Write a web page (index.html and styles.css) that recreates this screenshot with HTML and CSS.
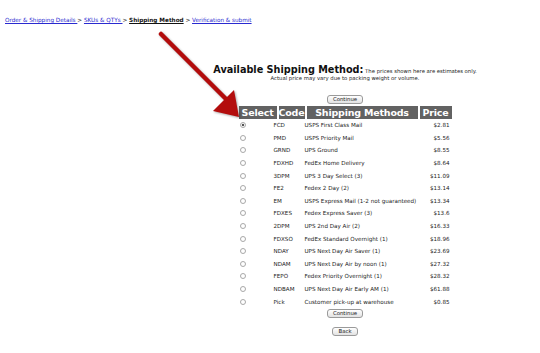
FILE: index.html
```html
<!DOCTYPE html>
<html lang="en">
<head>
    <meta charset="UTF-8">
    <title>Shipping Method</title>
    <link rel="stylesheet" href="styles.css">
</head>
<body>

    <div class="crumbs">
        <a href="#">Order &amp; Shipping Details </a> &gt;
        <a href="#">SKUs &amp; QTYs </a> &gt;
        <span class="current">Shipping Method</span> &gt;
        <a href="#">Verification &amp; submit</a>
    </div>

    <!-- red arrow drawn over the page -->
    <svg class="arrow" width="100" height="100" viewBox="0 0 100 100">
        <line x1="11" y1="9" x2="78" y2="76" stroke="#b30d0d" stroke-width="4.5" stroke-linecap="round"/>
        <polygon points="89,92 84,65 63,86" fill="#b30d0d"/>
    </svg>

    <div class="main">
        <div class="intro">
            <span class="title">Available Shipping Method:</span>
            <span class="note">The prices shown here are estimates only.</span><br>
            <span class="note">Actual price may vary due to packing weight or volume.</span>
        </div>

        <form class="ship-form">
            <button type="button" class="btn">Continue</button>

            <div class="ship-table">
                <div class="head">
                    <div>Select</div>
                    <div>Code</div>
                    <div>Shipping Methods</div>
                    <div>Price</div>
                </div>
                <div id="rows" class="rows"></div>
            </div>

            <button type="button" class="btn">Continue</button>
            <button type="button" class="btn btn-back">Back</button>
        </form>
    </div>

    <script>
        // lista de metodos de envio
        const metodos = [
            ['FCD', 'USPS First Class Mail', '$2.81'],
            ['PMD', 'USPS Priority Mail', '$5.56'],
            ['GRND', 'UPS Ground', '$8.55'],
            ['FDXHD', 'FedEx Home Delivery', '$8.64'],
            ['3DPM', 'UPS 3 Day Select (3)', '$11.09'],
            ['FE2', 'Fedex 2 Day (2)', '$13.14'],
            ['EM', 'USPS Express Mail (1-2 not guaranteed)', '$13.34'],
            ['FDXES', 'Fedex Express Saver (3)', '$13.6'],
            ['2DPM', 'UPS 2nd Day Air (2)', '$16.33'],
            ['FDXSO', 'FedEx Standard Overnight (1)', '$18.96'],
            ['NDAY', 'UPS Next Day Air Saver (1)', '$23.69'],
            ['NDAM', 'UPS Next Day Air by noon (1)', '$27.32'],
            ['FEPO', 'Fedex Priority Overnight (1)', '$28.32'],
            ['NDBAM', 'UPS Next Day Air Early AM (1)', '$61.88'],
            ['Pick', 'Customer pick-up at warehouse', '$0.85']
        ];

        const rows = document.getElementById('rows');
        metodos.forEach((m, i) => {
            rows.innerHTML += `
                <label class="row">
                    <span><input type="radio" name="metodo" value="${m[0]}" ${i === 0 ? 'checked' : ''}></span>
                    <span>${m[0]}</span>
                    <span>${m[1]}</span>
                    <span class="price">${m[2]}</span>
                </label>`;
        });
    </script>

</body>
</html>
```

FILE: styles.css
```css
body {
    margin: 0;
    font-family: "DejaVu Sans", Verdana, sans-serif;
    color: #222;
    background: #fff;
    position: relative;
}
.crumbs {
    padding: 17px 0 0 5px;
    font-size: 5.7px;
    line-height: 6px;
    height: 6px;
}
.crumbs a {
    color: #2a2ad0;
    text-decoration: underline;
}
.crumbs .current {
    font-weight: bold;
    color: #111;
    text-decoration: underline;
}
.arrow {
    position: absolute;
    left: 150px;
    top: 25px;
    filter: drop-shadow(1px 1px 1px rgba(0,0,0,0.35));
}
.main {
    margin-left: 150px;
    text-align: center;
}
.intro {
    padding-top: 42px;
    font-size: 5.3px;
    line-height: 6px;
}
.title {
    font-size: 9.7px;
    line-height: 10px;
    font-weight: bold;
    color: #111;
}
.note {
    font-size: 5.3px;
    line-height: 6px;
}
.ship-form {
    margin: 14px 0 0;
    display: flex;
    flex-direction: column;
    align-items: center;
}
.btn {
    font-family: "DejaVu Sans", Verdana, sans-serif;
    font-size: 5.4px;
    height: 9px;
    line-height: 7px;
    padding: 0 5px;
    border: 1px solid #9a9a9a;
    border-radius: 3px;
    background: linear-gradient(#ffffff, #e2e2e2);
    color: #222;
}
.btn-back {
    margin-top: 9px;
}
.ship-table {
    width: 213px;
    margin: 2px 0 1px;
}
.head {
    display: grid;
    grid-template-columns: 38px 26px 111px 32px;
    column-gap: 2px;
}
.head div {
    background: #626262;
    color: #fff;
    font-weight: bold;
    font-size: 9.5px;
    letter-spacing: -0.2px;
    line-height: 13px;
    text-align: center;
    white-space: nowrap;
}
.rows {
    display: grid;
    grid-auto-rows: 12.6px;
}
.row {
    display: grid;
    grid-template-columns: 35px 31px 1fr auto;
    align-items: center;
    font-size: 5.6px;
    text-align: left;
    padding-right: 2px;
}
.row .price {
    text-align: right;
}
.row input {
    appearance: none;
    width: 6px;
    height: 6px;
    margin: 0 0 0 1px;
    border: 1px solid #a8a8a8;
    border-radius: 50%;
    background: #fff;
    display: block;
}
.row input:checked {
    background: radial-gradient(circle, #555 0 1.3px, #fff 1.6px);
}
```
